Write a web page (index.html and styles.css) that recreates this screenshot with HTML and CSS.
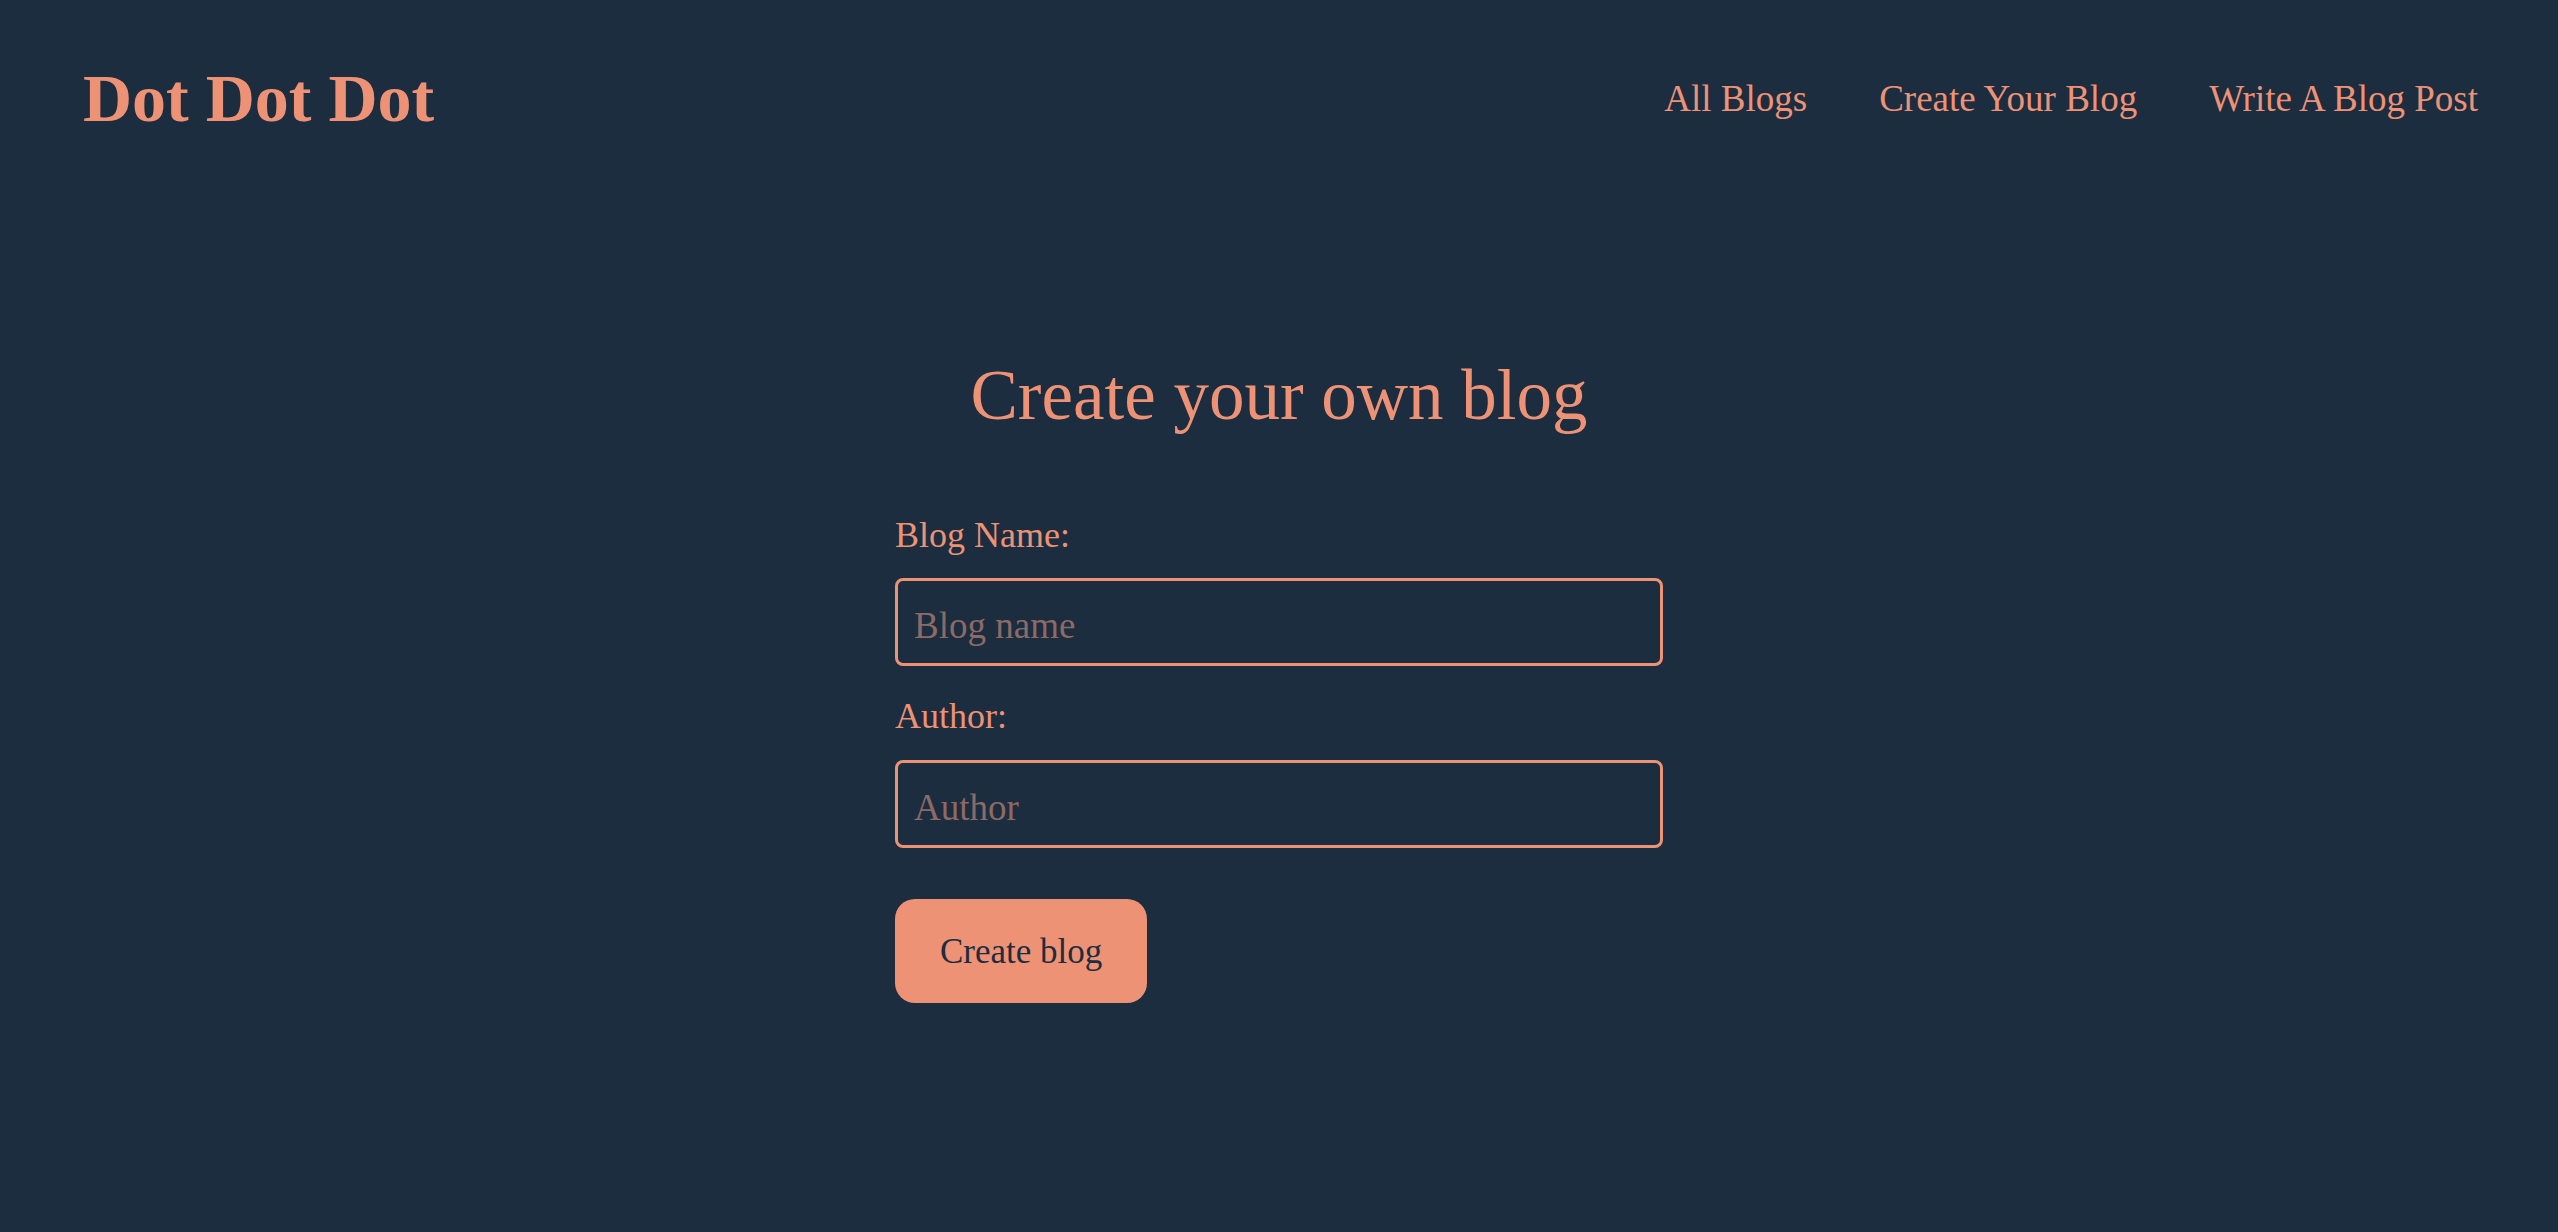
FILE: index.html
```html
<!DOCTYPE html>
<html lang="en">
<head>
<meta charset="utf-8">
<title>Dot Dot Dot</title>
<link rel="stylesheet" href="styles.css">
</head>
<body>
<header class="site-header">
  <a class="logo" href="#">Dot Dot Dot</a>
  <nav class="nav">
    <a href="#">All Blogs</a>
    <a href="#">Create Your Blog</a>
    <a href="#">Write A Blog Post</a>
  </nav>
</header>
<main class="main">
  <h1 class="title">Create your own blog</h1>
  <form class="form">
    <label class="label" for="name">Blog Name:</label>
    <input class="input" id="name" type="text" placeholder="Blog name">
    <label class="label label-second" for="author">Author:</label>
    <input class="input" id="author" type="text" placeholder="Author">
    <button class="btn" type="button">Create blog</button>
  </form>
</main>
</body>
</html>
```

FILE: styles.css
```css
html, body {
  margin: 0;
  padding: 0;
  background: #1b2d3f;
  min-height: 100%;
}
body {
  font-family: "Liberation Serif", "Times New Roman", serif;
  color: #ee9276;
  height: 1232px;
}
a {
  color: inherit;
  text-decoration: none;
}
.site-header {
  display: flex;
  align-items: center;
  justify-content: space-between;
  padding: 64px 80px 0 83px;
}
.logo {
  font-size: 68px;
  line-height: 68px;
  font-weight: 700;
}
.nav {
  display: flex;
  gap: 72px;
  font-size: 37px;
  line-height: 37px;
}
.main {
  display: flex;
  flex-direction: column;
  align-items: center;
}
.title {
  margin: 228px 0 0;
  font-size: 71px;
  line-height: 71px;
  font-weight: 400;
}
.form {
  width: 768px;
  display: flex;
  flex-direction: column;
  align-items: flex-start;
  margin-top: 86px;
}
.label {
  font-size: 36px;
  line-height: 36px;
  margin-bottom: 25px;
}
.label-second {
  margin-top: 32px;
  margin-bottom: 26px;
}
.input {
  box-sizing: border-box;
  width: 768px;
  height: 88px;
  border: 3px solid #ee9276;
  border-radius: 8px;
  background: #1b2d3f;
  color: #ee9276;
  font-family: "Liberation Serif", "Times New Roman", serif;
  font-size: 37px;
  padding: 6px 16px 0;
  outline: none;
}
.input::placeholder {
  color: #8c6a66;
  opacity: 1;
}
.btn {
  margin-top: 51px;
  height: 104px;
  padding: 0 45px;
  border: none;
  border-radius: 20px;
  background: #ee9276;
  color: #1b2d3f;
  font-family: "Liberation Serif", "Times New Roman", serif;
  font-size: 35px;
  line-height: 35px;
  cursor: pointer;
}
```
